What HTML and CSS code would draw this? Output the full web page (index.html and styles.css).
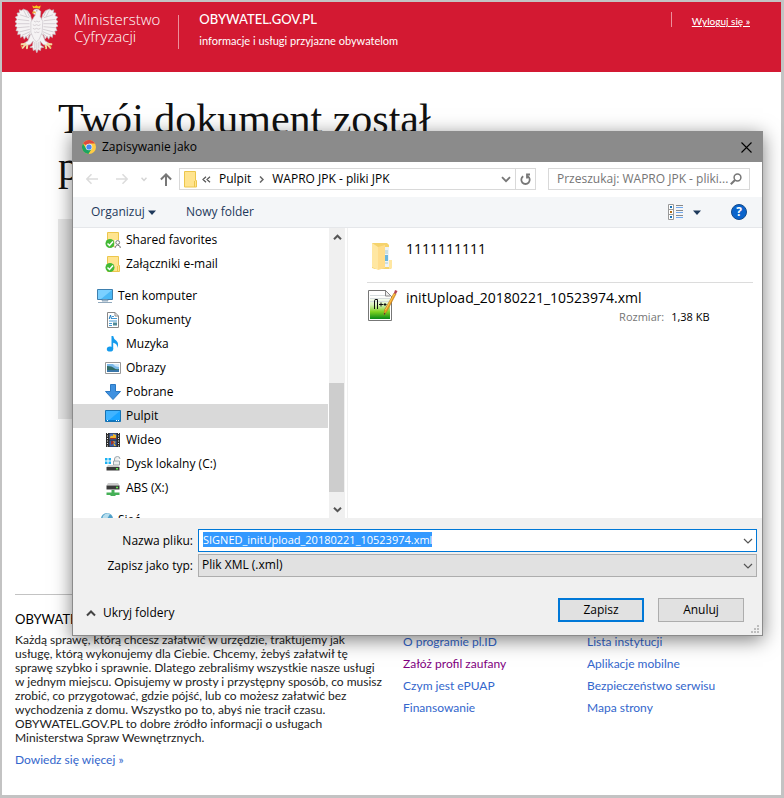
FILE: index.html
```html
<!DOCTYPE html>
<html lang="pl">
<head>
<meta charset="utf-8">
<title>OBYWATEL.GOV.PL</title>
<link rel="stylesheet" href="styles.css">
</head>
<body>
<div class="page">
  <header class="site-header">
    <svg class="eagle" viewBox="0 0 130 144" aria-hidden="true">
      <g fill="#f5f3f4" stroke="#c9c3c8" stroke-width="2" stroke-linejoin="round">
        <path d="M52 50 46 28 38 17 26 12 19 16 13 14 14 23 6 24 9 32 1 36 6 43 0 50 6 55 0 63 7 67 3 77 10 78 8 89 16 87 17 98 24 93 28 103 33 94 39 102 43 90 52 88Z"/>
        <path d="M78 50 84 28 92 17 104 12 111 16 117 14 116 23 124 24 121 32 129 36 124 43 130 50 124 55 130 63 123 67 127 77 120 78 122 89 114 87 113 98 106 93 102 103 97 94 91 102 87 90 78 88Z"/>
        <path d="M47 88 39 108 26 116 32 122 46 119 55 108 53 123 45 127 54 129 55 137 62 134 66 144 70 134 77 137 78 129 87 127 78 122 76 108 85 119 98 122 104 116 91 108 83 88Z"/>
        <path d="M56 15Q68 7 78 19L76 34 84 49 82 82 73 103 65 111 57 103 48 82 48 51 58 35 62 29 56 27Z"/>
      </g>
      <g fill="none" stroke="#c4bcc2" stroke-width="2">
        <path d="M43 38 15 29M43 47 9 43M44 56 8 56M44 65 9 68M45 73 13 81M46 80 21 91M46 85 33 96M36 18 44 35M26 15 36 35M87 38 115 29M87 47 121 43M86 56 122 56M86 65 121 68M85 73 117 81M84 80 109 91M84 85 97 96M94 18 86 35M104 15 94 35"/>
        <path d="M57 48q5 5 9 0 5 5 10 0M54 59q6 5 11 0 6 5 12 0M54 70q6 5 11 0 6 5 12 0M58 81q4 4 7 0 5 4 9 0M60 111v20M66 113v25M72 111v20"/>
      </g>
      <path d="M55 9 52 1 59 4 65 0 70 4 78 1 75 11Q65 7 55 9Z" fill="#f7c51e"/>
      <path d="M61 18 52 20 53 26 59 24 64 26Z" fill="#eab13a"/>
      <g fill="none" stroke="#f4d9a3" stroke-width="6" stroke-linecap="round"><path d="M32 117 20 118M30 121 23 129M37 122 36 130M98 117 110 118M100 121 107 129M93 122 94 130"/></g>
      <path d="M18 121 21 127M109 121 106 129M92 127v4" stroke="#e5a03a" stroke-width="3"/>
      <circle cx="66" cy="17" r="2" fill="#8a7f86"/>
    </svg>
    <p class="ministry">Ministerstwo<br>Cyfryzacji</p>
    <div class="brand">
      <strong>OBYWATEL.GOV.PL</strong>
      <span>informacje i usługi przyjazne obywatelom</span>
    </div>
    <a class="logout" href="#logout"><span>Wyloguj się »</span></a>
  </header>

  <main class="content">
    <h1>Twój dokument został<br>podpisany</h1>
    <div class="panel"></div>
  </main>

  <footer class="site-footer">
    <section class="about">
      <h2>OBYWATEL.GOV.PL</h2>
      <p>Każdą sprawę, którą chcesz załatwić w urzędzie, traktujemy jak<br>usługę, którą wykonujemy dla Ciebie. Chcemy, żebyś załatwił tę<br>sprawę szybko i sprawnie. Dlatego zebraliśmy wszystkie nasze usługi<br>w jednym miejscu. Opisujemy w prosty i przystępny sposób, co musisz<br>zrobić, co przygotować, gdzie pójść, lub co możesz załatwić bez<br>wychodzenia z domu. Wszystko po to, abyś nie tracił czasu.<br>OBYWATEL.GOV.PL to dobre źródło informacji o usługach<br>Ministerstwa Spraw Wewnętrznych.</p>
      <a href="#more">Dowiedz się więcej »</a>
    </section>
    <nav class="links">
      <a href="#plid">O programie pl.ID</a>
      <a class="visited" href="#profil">Załóż profil zaufany</a>
      <a href="#epuap">Czym jest ePUAP</a>
      <a href="#finanse">Finansowanie</a>
    </nav>
    <nav class="links">
      <a href="#lista">Lista instytucji</a>
      <a href="#mobile">Aplikacje mobilne</a>
      <a href="#security">Bezpieczeństwo serwisu</a>
      <a href="#mapa">Mapa strony</a>
    </nav>
  </footer>
</div>

<div class="dialog" role="dialog" aria-labelledby="dialog-title">
  <div class="titlebar">
    <svg width="14" height="14" viewBox="0 0 14 14" aria-hidden="true">
      <circle cx="7" cy="7" r="7" fill="#fc4"/>
      <path d="M7 7 1 3.4A7 7 0 0 1 13.1 3.6H7Z" fill="#dd4b3e"/>
      <path d="M1 3.4A7 7 0 0 0 6.4 14L9.7 8.7 4.2 8.6Z" fill="#1da462"/>
      <circle cx="7" cy="7" r="3.3" fill="#eee"/><circle cx="7" cy="7" r="2.6" fill="#4688f4"/>
    </svg>
    <span id="dialog-title">Zapisywanie jako</span>
    <button class="close" aria-label="Zamknij"><svg width="11" height="11" viewBox="0 0 11 11"><path d="M.5.5l10 10M10.500.5l-10 10" stroke="#000" stroke-width="1.1"/></svg></button>
  </div>

  <div class="navbar">
    <div class="arrows">
      <button aria-label="Wstecz"><svg width="12" height="12" viewBox="0 0 12 12"><path d="M12 6H1M5.500 1.200.8 6l4.700 4.800" fill="none" stroke="#dcdcdc" stroke-width="1.600"/></svg></button>
      <button aria-label="Dalej"><svg width="12" height="12" viewBox="0 0 12 12"><path d="M0 6h11M6.500 1.200 11.200 6l-4.700 4.800" fill="none" stroke="#dcdcdc" stroke-width="1.600"/></svg></button>
      <button class="small" aria-label="Ostatnie"><svg width="6" height="5" viewBox="0 0 6 5"><path d="M.5.8 3 3.500 5.500.8" fill="none" stroke="#d4d4d4" stroke-width="1.500"/></svg></button>
      <button aria-label="W górę"><svg width="12" height="13" viewBox="0 0 12 13"><path d="M6 13V2M.9 6.500 6 1.400l5.100 5.100" fill="none" stroke="#777" stroke-width="2"/></svg></button>
    </div>
    <div class="address">
      <svg width="13" height="17" viewBox="0 0 13 17" aria-hidden="true"><path d="M.5.500h11v9h1v6.500H.5z" fill="#ffe48f" stroke="#ecc64c"/><path d="M10.500 10v6" stroke="#ecc64c"/></svg>
      <svg class="laquo" width="9" height="7" viewBox="0 0 9 7" aria-hidden="true"><path d="M4 .8 1 3.500l3 2.700M8 .8 5 3.500l3 2.700" fill="none" stroke="#555" stroke-width="1.200"/></svg>
      <span>Pulpit</span>
      <svg class="crumb" width="5" height="7" viewBox="0 0 5 7" aria-hidden="true"><path d="M1 .5 4 3.500 1 6.500" fill="none" stroke="#666" stroke-width="1.500"/></svg>
      <span>WAPRO JPK - pliki JPK</span>
      <button class="drop" aria-label="Poprzednie lokalizacje"><svg width="10" height="7" viewBox="0 0 10 7"><path d="M1 1.200 5 5.200l4-4" fill="none" stroke="#777" stroke-width="1.800"/></svg></button>
      <button class="refresh" aria-label="Odśwież"><svg width="11" height="12" viewBox="0 0 11 12"><path d="M7.800 3.300A4.200 4.200 0 1 1 3.200 3.300M1 1.500h3v4" fill="none" stroke="#777" stroke-width="1.800"/></svg></button>
    </div>
    <label class="search">
      <input type="text" aria-label="Przeszukaj" placeholder="Przeszukaj: WAPRO JPK - pliki...">
      <svg width="12" height="12" viewBox="0 0 12 12" aria-hidden="true"><circle cx="7.500" cy="4.500" r="3.400" fill="none" stroke="#777" stroke-width="1.500"/><path d="M5 7 .8 11.200" stroke="#777" stroke-width="2"/></svg>
    </label>
  </div>

  <div class="toolbar">
    <button class="organize">Organizuj <svg width="8" height="5" viewBox="0 0 8 5"><path d="M0 .5h8L4 5z" fill="#1e395b"/></svg></button>
    <button>Nowy folder</button>
    <button class="view" aria-label="Zmień widok">
      <svg width="15" height="16" viewBox="0 0 15 16"><path d="M.5.500h5v15h-5zM.5 5.500h5M.5 10.500h5" fill="#fff" stroke="#999"/><path d="M2 3h2" stroke="#1672b8" stroke-width="2"/><path d="M2 8h2" stroke="#b06d16" stroke-width="2"/><path d="M2 13h2" stroke="#1672b8" stroke-width="2"/><path d="M8 1.500h7M8 6.500h7M8 11.500h7" stroke="#888"/><path d="M8 3.500h7M8 8.500h7M8 13.500h7" stroke="#72a9ef"/></svg>
      <svg width="8" height="5" viewBox="0 0 8 5"><path d="M0 .5h8L4 5z" fill="#1e395b"/></svg>
    </button>
    <button class="help" aria-label="Pomoc">?</button>
  </div>

  <div class="browser">
    <ul class="tree">
      <li><svg viewBox="0 0 16 16"><path d="M2.500.500h11v14h-11z" fill="#ffe48f" stroke="#ecc64c"/><circle cx="5" cy="11.500" r="4.500" fill="#43b936"/><path d="m2.500 11.500 2 2 3.500-4" fill="none" stroke="#fff" stroke-width="1.500"/><rect x="9.500" y="8" width="6.500" height="8" fill="#fff"/><circle cx="12.700" cy="10.500" r="1.900" fill="none" stroke="#777"/><path d="M10.200 16v-1.500q2.500-3 5 0V16" fill="none" stroke="#777"/></svg>Shared favorites</li>
      <li><svg viewBox="0 0 16 16"><path d="M2.500.500h11v9h1v6h-12z" fill="#ffe48f" stroke="#ecc64c"/><path d="M12.500 10v5" stroke="#ecc64c"/><circle cx="5" cy="11.500" r="4.500" fill="#43b936"/><path d="m2.500 11.500 2 2 3.500-4" fill="none" stroke="#fff" stroke-width="1.500"/></svg>Załączniki e-mail</li>
      <li class="root"><svg viewBox="0 0 16 16"><path d="M.5 1.500h15v10H.5z" fill="#4bb8f5" stroke="#3e7fae"/><path d="M1 2h14L4 11H1z" fill="#7bd0ff"/><path d="M5.500 12h5l.5 1H5zM1 14.500h14" fill="#b8cddd" stroke="#91a9bd"/></svg>Ten komputer</li>
      <li><svg viewBox="0 0 16 16"><path d="M2.500.500H10l3.500 3.500v11.500h-11z" fill="#fff" stroke="#888"/><path d="M10 .5V4h3.500" fill="none" stroke="#888"/><path d="M7 4.500h2M7 6.500h5M4 9h8M4 11.500h3M4 13.500h3" stroke="#4498d2"/><path d="M4.200 7 5.500 3l1 4" fill="none" stroke="#1679c1"/><path d="M8 10.500h4v3H8z" fill="#4f8b9a"/></svg>Dokumenty</li>
      <li><svg viewBox="0 0 16 16"><ellipse cx="5" cy="13" rx="3.200" ry="2.600" fill="#159bed"/><path d="M6.500 13V0h1.700q.3 2.800 3.200 4.800 3 2.800.7 7.200.7-4.500-3.900-5.300V13z" fill="#159bed"/></svg>Muzyka</li>
      <li><svg viewBox="0 0 16 16"><path d="M.5 2.500h15v11H.5z" fill="#fff" stroke="#999"/><path d="M2 4h12v8H2z" fill="#7bb9e9"/><path d="M2 6q5 0 7 2t5 1v1H2z" fill="#316d67"/><path d="M2 10h12v2H2z" fill="#3976a8"/><path d="M8 4h6v3q-4 0-6-3z" fill="#cfe8fa"/></svg>Obrazy</li>
      <li><svg viewBox="0 0 16 16"><path d="M5.500.500h5v7h5L8 15.500.5 7.500h5z" fill="#3f91e0" stroke="#2b78c2"/></svg>Pobrane</li>
      <li class="selected"><svg viewBox="0 0 16 16"><path d="M.5 2.500h15v11H.5z" fill="#19a4ff" stroke="#1672b2"/><path d="M1 3h14L4 12H1z" fill="#40b4ff"/><path d="M1 12.500h14" stroke="#0879c9"/><path d="M2 12.500h1M11 12.500h1M13 12.500h1" stroke="#fff"/></svg>Pulpit</li>
      <li><svg viewBox="0 0 16 16"><path d="M1 1h14v14H1z" fill="#2c2c2c"/><path d="M2.500 1v14M13.500 1v14" stroke="#eee" stroke-dasharray="1 1.500"/><path d="M4.500 1.500h7v6h-7z" fill="#4e72c0"/><path d="M4.500 8.500h7v6h-7z" fill="#375fac"/><path d="M5 6q0-3 3-2V2l3 1v3L8 7zM8 9l3 1-2 1 2 3H9z" fill="#f0b529"/><path d="M5 6h6v1H5zM6 9h2l1 2-3 2z" fill="#9c302a"/></svg>Wideo</li>
      <li><svg viewBox="0 0 16 16"><path d="M0 2h2.500v2.500H0zM3.500 2H6v2.500H3.500zM0 5.500h2.500V8H0zM3.500 5.500H6V8H3.500z" fill="#1cb2f3"/><path d="M9.500 5V3q0-2.500 3-2.500 2.500 0 2.500 2.500M8.500 5h6v4h-6z" fill="#eee" stroke="#9aa6ad"/><path d="m3 9-1.500 2h13L13 9z" fill="#ccc"/><path d="M1.500 11h13v3.500h-13z" fill="#3a3a3a"/><path d="M11 12.700h2" stroke="#5eea50" stroke-width="1.500"/></svg>Dysk lokalny (C:)</li>
      <li><svg viewBox="0 0 16 16"><path d="m3 3-1.500 2.500h13L13 3z" fill="#ccc"/><path d="M1.500 5.500h13v4h-13z" fill="#3a3a3a"/><path d="M11 7.500h2" stroke="#5eea50" stroke-width="1.500"/><path d="M6.500 10h3v2.500h5V15h-4v1h-5v-1h-4v-2.500h5z" fill="#45b057"/></svg>ABS (X:)</li>
      <li class="root"><svg viewBox="0 0 16 16"><circle cx="10" cy="7" r="6" fill="#4e9fc9"/><path d="M6 4q3-4 7-2l-3 5-5 1zM12 8l3-1-2 4z" fill="#b6dded"/><path d="M1 7h8v7H1z" fill="#5eb5ed"/></svg>Sieć</li>
    </ul>
    <div class="scrollbar" aria-hidden="true">
      <svg width="9" height="7" viewBox="0 0 9 7"><path d="M1 5.200 4.500 1.700 8 5.200" fill="none" stroke="#555" stroke-width="2"/></svg>
      <div class="track"><div class="thumb"></div></div>
      <svg width="9" height="7" viewBox="0 0 9 7"><path d="M1 1.700 4.500 5.200 8 1.700" fill="none" stroke="#555" stroke-width="2"/></svg>
    </div>
    <div class="files">
      <div class="file folder">
        <svg width="32" height="32" viewBox="0 0 32 32" aria-hidden="true"><path d="M5 3h15l2 2v15l3 1v7l-2 1H8L5 28z" fill="#f5d36d"/><path d="M17 7h5v20h-5z" fill="#eef3f7"/><path d="M18 11h3M18 13h3M18 23h3" stroke="#acc"/><path d="M18 15h3v6h-3z" fill="#6bb6de"/><path d="m5 3 6 4v23l-6-3z" fill="#ffe7a2"/><path d="M11 7 18 5v23l-7 2z" fill="#ffdd8c"/><path d="M22 20h3v8l-3 1z" fill="#ffe7a2"/></svg>
        <span>1111111111</span>
      </div>
      <div class="file">
        <svg width="32" height="32" viewBox="0 0 32 32" aria-hidden="true"><defs><linearGradient id="notepad" x1="0" y1="0" x2="0" y2="1"><stop offset=".15" stop-color="#fff"/><stop offset=".45" stop-color="#d9f2bd"/><stop offset=".72" stop-color="#7fd222"/><stop offset="1" stop-color="#078818"/></linearGradient></defs><path d="M1.500 1.500h17l6 6v24h-23z" fill="#fff" stroke="#777"/><path d="M3 4h15l5 5v21H3z" fill="url(#notepad)"/><path d="M3 6.500h16M3 9.500h20M3 12.500h20" stroke="#d5dcde"/><path d="M2 1.500h18" stroke="#777" stroke-dasharray="1 1"/><path d="M18.500 2v5h5" fill="#eee" stroke="#888"/><path d="M7.500 20V11.500q0-1 1.500-1h1.500V20M12 15.500h4M14 13.500v4M16.500 15.500h3M18 14v3" fill="none" stroke="#111"/><path d="m27 4 2 1-9 17-3 4 .500-5z" fill="#e89b25" stroke="#b87820" stroke-width=".6"/><path d="m27.500 5-9 16" stroke="#ffc84e"/><path d="m28 1 2.500 1L29 5l-2-1z" fill="#b44250"/><path d="m17.200 24-.2 2 1.500-1.500z" fill="#333"/></svg>
        <div class="file-info">
          <span>initUpload_20180221_10523974.xml</span>
          <small><span class="muted">Rozmiar:</span><span>1,38 KB</span></small>
        </div>
      </div>
    </div>
  </div>

  <form class="save-form">
    <div class="field">
      <label for="file-name">Nazwa pliku:</label>
      <div class="control">
        <input id="file-name" type="text" value="SIGNED_initUpload_20180221_10523974.xml">
        <svg class="chevron" width="10" height="6" viewBox="0 0 10 6" aria-hidden="true"><path d="M1 1 5 5 9 1" fill="none" stroke="#555" stroke-width="1.200"/></svg>
      </div>
    </div>
    <div class="field">
      <label for="file-type">Zapisz jako typ:</label>
      <div class="control">
        <select id="file-type"><option>Plik XML (.xml)</option></select>
        <svg class="chevron" width="10" height="6" viewBox="0 0 10 6" aria-hidden="true"><path d="M1 1 5 5 9 1" fill="none" stroke="#555" stroke-width="1.200"/></svg>
      </div>
    </div>
    <div class="actions">
      <button type="button" class="toggle"><svg width="10" height="7" viewBox="0 0 10 7"><path d="M1 5.500 5 1.500l4 4" fill="none" stroke="#444" stroke-width="2"/></svg>Ukryj foldery</button>
      <button type="submit" class="push primary">Zapisz</button>
      <button type="button" class="push">Anuluj</button>
    </div>
    <svg class="grip" width="8" height="8" viewBox="0 0 8 8" aria-hidden="true"><path d="M6 0h2v2H6zM3 3h2v2H3zM6 3h2v2H6zM0 6h2v2H0zM3 6h2v2H3zM6 6h2v2H6z" fill="#bdbdbd"/></svg>
  </form>
</div>
<script src="script.js"></script>
</body>
</html>
```

FILE: styles.css
```css
* { box-sizing: border-box; }

body {
  margin: 0;
  position: relative;
  min-height: 100vh;
  background: #c3c3c3;
  font-family: Lato, sans-serif;
  color: #222;
}

h1, h2, p, ul { margin: 0; padding: 0; }

button {
  border: 0;
  padding: 0;
  background: none;
  font: inherit;
  color: inherit;
}

svg { display: block; flex: none; }

.page {
  display: flex;
  flex-direction: column;
  min-height: 100vh;
  border: 2px solid #c3c3c3;
  border-width: 2px 3px 3px 2px;
  background: #fff;
}

.site-header {
  display: flex;
  align-items: flex-start;
  height: 70px;
  padding: 3px 31px 0 13px;
  background: #d31932;
  color: #fff;
}

.eagle { width: 43px; height: 48px; }

.ministry {
  margin: 6px 18px 0 16px;
  font: 300 15px/17px "Open Sans", sans-serif;
}

.brand {
  display: flex;
  flex-direction: column;
  gap: 6px;
  margin-top: 10px;
  padding-left: 20px;
  border-left: 1px solid #ec8f9b;
  font-size: 11px;
  line-height: 16px;
}

.brand strong {
  margin-top: -4px;
  font-size: 13px;
  font-weight: 500;
}

.logout {
  margin: 7px 0 0 auto;
  padding-left: 20px;
  border-left: 1px solid #ec8f9b;
  color: #fff;
  font-size: 10px;
  font-weight: 500;
  line-height: 18px;
  height: 15px;
}

.content { padding: 24px 56px 0; }

h1 {
  font: 400 42px/47px "Liberation Serif", serif;
  color: #111;
}

.panel {
  height: 200px;
  margin-top: 29px;
  background: #e8e8e8;
}

.site-footer {
  display: grid;
  grid-template-columns: 368px 164px 1fr;
  column-gap: 20px;
  margin: 175px 20px 0 13px;
  padding-top: 16px;
  border-top: 1px solid #c3c3c3;
  font-size: 12px;
  line-height: 14px;
}

.about h2 {
  margin-bottom: 6px;
  font-size: 13px;
  font-weight: 400;
  line-height: 16px;
  color: #000;
}

.about p { margin-bottom: 8px; white-space: nowrap; }

.site-footer a { color: #3366cc; text-decoration: none; }
.site-footer .visited { color: #800080; }

.links {
  display: flex;
  flex-direction: column;
  gap: 8px;
  padding-top: 24px;
}

/* Save dialog */
.dialog {
  position: absolute;
  top: 131px;
  left: 72px;
  right: 21px;
  border: 1px solid #8b8b8b;
  background: #fff;
  box-shadow: 0 4px 18px rgba(0, 0, 0, .5);
  font: 12px/16px "Open Sans", sans-serif;
  color: #000;
}

.titlebar {
  display: flex;
  align-items: center;
  gap: 6px;
  height: 30px;
  padding: 0 10px 0 9px;
  background: #8b8b8b;
}

.close { margin-left: auto; }

.navbar {
  display: flex;
  align-items: center;
  height: 35px;
  padding: 0 12px 1px 0;
}

.arrows {
  display: flex;
  align-items: center;
  gap: 18px;
  padding-left: 13px;
}

.arrows .small { margin: 0 -5px; }

.address {
  display: flex;
  align-items: center;
  flex: 1;
  height: 22px;
  margin: 0 12px 0 7px;
  padding-left: 4px;
  border: 1px solid #d9d9d9;
  line-height: 20px;
  white-space: nowrap;
}

.laquo { margin: 0 8px 0 5px; }
.crumb { margin: 0 8px; }
.drop { margin-left: auto; padding: 0 4px; }

.refresh {
  display: grid;
  place-items: center;
  align-self: stretch;
  width: 20px;
  border-left: 1px solid #d9d9d9;
}

.refresh svg { transform: scaleX(-1); }

.search {
  display: flex;
  align-items: center;
  width: 202px;
  height: 22px;
  padding: 0 7px 0 8px;
  border: 1px solid #d9d9d9;
}

.search input {
  flex: 1;
  min-width: 0;
  padding: 0;
  border: 0;
  background: none;
  font: inherit;
}

.search input::placeholder { color: #757575; }

.toolbar {
  display: flex;
  align-items: center;
  gap: 30px;
  height: 31px;
  padding: 0 15px 0 18px;
  border-bottom: 1px solid #e5e7ea;
  background: #f4f6f8;
  color: #1e395b;
}

.toolbar svg { display: inline-block; vertical-align: middle; }
.view { display: flex; align-items: center; gap: 10px; margin-left: auto; }

.help {
  width: 16px;
  height: 16px;
  border: 1px solid #124a8c;
  border-radius: 50%;
  background: #0a64cc;
  color: #fff;
  font-weight: 700;
  line-height: 14px;
}

.browser { display: flex; height: 290px; }

.tree {
  width: 255px;
  overflow: hidden;
  list-style: none;
}

.tree li {
  display: flex;
  align-items: center;
  gap: 5px;
  height: 24px;
  padding-left: 32px;
}

.tree svg { width: 16px; height: 16px; }
.tree .root { margin-top: 8px; padding-left: 24px; }
.tree .selected { background: #d9d9d9; }

.scrollbar {
  display: flex;
  flex-direction: column;
  align-items: center;
  width: 16px;
  margin: 0 2px 0 1px;
  padding: 6px 0 5px;
  background: #f0f0f0;
}

.track {
  display: flex;
  flex: 1;
  align-items: flex-end;
  align-self: stretch;
  padding: 0 1px 14px 0;
}

.thumb { width: 100%; height: 109px; background: #cdcdcd; }

.files {
  flex: 1;
  padding: 12px 9px 0 19px;
  border-left: 1px solid #f0f0f0;
  font-size: 14px;
  line-height: 18px;
}

.file { display: flex; gap: 7px; padding-top: 6px; }
.file.folder { height: 43px; padding-top: 0; border-bottom: 1px solid #dcdcdc; }
.file-info { display: flex; flex-direction: column; }

.file small {
  display: flex;
  gap: 7px;
  align-self: flex-end;
  margin-right: -68px;
  font-size: 11px;
  line-height: 20px;
}

.muted { color: #757575; }

.save-form {
  position: relative;
  padding: 11px 5px 13px;
  background: #f0f0f0;
}

.field { display: flex; align-items: center; margin-bottom: 2px; }
.field label { width: 115px; text-align: right; }
.control { position: relative; flex: 1; margin-left: 5px; }

.control input,
.control select {
  display: block;
  width: 100%;
  height: 23px;
  padding: 0 20px 2px 4px;
  border: 1px solid #adadad;
  border-radius: 0;
  outline: 0;
  appearance: none;
  background: #e1e1e1;
  color: #000;
  font: inherit;
}

.control input {
  border-color: #0078d7;
  background: #fff;
  font-size: 11px;
}

.control input::selection { background: #3399ff; color: #fff; }
.control select { padding-left: 3px; }
.chevron { position: absolute; top: 9px; right: 4px; }

.actions {
  display: flex;
  align-items: center;
  gap: 14px;
  margin-top: 21px;
  padding: 0 13px 0 8px;
}

.toggle {
  display: flex;
  align-items: center;
  gap: 7px;
  margin-right: auto;
  padding-top: 6px;
}

.push {
  width: 86px;
  height: 24px;
  border: 1px solid #adadad;
  background: #e1e1e1;
}

.push.primary { border: 2px solid #0078d7; }
.grip { position: absolute; right: 3px; bottom: 2px; }
```

FILE: script.js
```js
document.getElementById("file-name").select();
```
